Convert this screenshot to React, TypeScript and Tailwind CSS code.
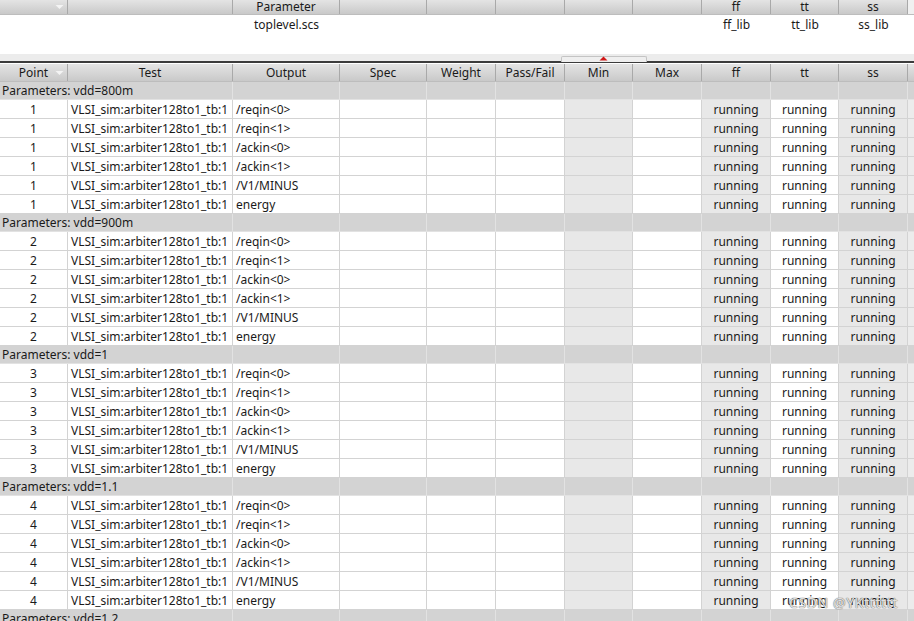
import React from "react";

const W = [68, 165, 107, 87, 69, 69, 68, 69, 69, 68, 69];
const HEAD = ["Point", "Test", "Output", "Spec", "Weight", "Pass/Fail", "Min", "Max", "ff", "tt", "ss"];
const GROUPS = ["vdd=800m", "vdd=900m", "vdd=1", "vdd=1.1", "vdd=1.2"];
const OUTS = ["/reqin<0>", "/reqin<1>", "/ackin<0>", "/ackin<1>", "/V1/MINUS", "energy"];

function Arrow() {
  return (
    <svg width="9" height="5" viewBox="0 0 9 5" className="shrink-0">
      <path d="M0.5 0.5 L8.5 0.5 L4.5 4.5 Z" fill="#f4f4f4" />
    </svg>
  );
}

function HeaderCell({ w, children, arrow }: { w: number; children?: React.ReactNode; arrow?: boolean }) {
  return (
    <div
      className="relative flex h-full shrink-0 items-center justify-center border-r border-[#a9a9a9] bg-gradient-to-b from-[#e4e4e4] to-[#c9c9c9]"
      style={{ width: w }}
    >
      <span className="text-[#1a1a1a]">{children}</span>
      {arrow && (
        <span className="absolute right-[3px] top-1/2 -translate-y-1/2">
          <Arrow />
        </span>
      )}
    </div>
  );
}

function Cell({
  w,
  children,
  bg = "bg-white",
  align = "center",
}: {
  w: number;
  children?: React.ReactNode;
  bg?: string;
  align?: "center" | "left";
}) {
  return (
    <div
      className={`flex h-full shrink-0 items-center overflow-hidden whitespace-nowrap border-r border-b border-[#d3d3d3] pt-[1px] ${bg} ${
        align === "center" ? "justify-center" : "justify-start pl-[3px]"
      }`}
      style={{ width: w }}
    >
      {children}
    </div>
  );
}

function GroupRow({ label }: { label: string }) {
  return (
    <div className="flex h-[18px] shrink-0">
      <div
        className="flex h-full shrink-0 items-center whitespace-nowrap border-r border-b border-[#e2e2e2] bg-[#d3d3d3] pl-[2px] pt-[1px]"
        style={{ width: W[0] + W[1] }}
      >
        Parameters: {label}
      </div>
      {W.slice(2).map((w, i) => (
        <div
          key={i}
          className="h-full shrink-0 border-r border-b border-[#e2e2e2] bg-[#d3d3d3]"
          style={{ width: w }}
        />
      ))}
      <div className="h-full flex-1 border-b border-[#e2e2e2] bg-[#d3d3d3]" />
    </div>
  );
}

function DataRow({ p, out }: { p: number; out: string }) {
  return (
    <div className="flex h-[19px] shrink-0">
      <Cell w={W[0]}>{p}</Cell>
      <Cell w={W[1]} align="left">VLSI_sim:arbiter128to1_tb:1</Cell>
      <Cell w={W[2]} align="left">{out}</Cell>
      <Cell w={W[3]} />
      <Cell w={W[4]} />
      <Cell w={W[5]} />
      <Cell w={W[6]} bg="bg-[#e8e8e8]" />
      <Cell w={W[7]} />
      <Cell w={W[8]} bg="bg-[#e8e8e8]">running</Cell>
      <Cell w={W[9]}>running</Cell>
      <Cell w={W[10]} bg="bg-[#e8e8e8]">running</Cell>
      <div className="h-full flex-1 border-b border-[#d3d3d3] bg-[#ececec]" />
    </div>
  );
}

export default function App() {
  const topHead = ["", "", "Parameter", "", "", "", "", "", "ff", "tt", "ss"];
  const topRow = ["", "", "toplevel.scs", "", "", "", "", "", "ff_lib", "tt_lib", "ss_lib"];
  return (
    <div
      className="relative flex h-[621px] w-[914px] flex-col overflow-hidden bg-white text-[12px] leading-none text-[#1a1a1a]"
      style={{ fontFamily: '"Noto Sans", "Open Sans", sans-serif' }}
    >
      {/* top pane */}
      <div className="flex h-[15px] shrink-0 border-b border-[#bdbdbd] leading-[14px]">
        {topHead.map((h, i) => (
          <HeaderCell key={i} w={W[i]} arrow={i === 0}>
            {h}
          </HeaderCell>
        ))}
        <div className="h-full flex-1 bg-[#f0f0f0]" />
      </div>
      <div className="flex h-[19px] shrink-0">
        {topRow.map((t, i) => (
          <div key={i} className="flex h-full shrink-0 items-center justify-center" style={{ width: W[i] }}>
            {t}
          </div>
        ))}
      </div>
      <div className="h-[20px] shrink-0 bg-white" />
      {/* splitter */}
      <div className="relative h-[7px] shrink-0 bg-[#ececec]">
        <div className="absolute left-[561px] top-[2px] h-[6px] w-[86px] rounded-t-[2px] border border-b-0 border-[#c4c4c4] bg-[#efefef]" />
        <svg className="absolute left-[599px] top-[2px]" width="9" height="5" viewBox="0 0 9 5">
          <path d="M0.5 4.5 L4.5 0.5 L8.5 4.5 Z" fill="#d01818" />
        </svg>
      </div>
      <div className="h-[2px] shrink-0 bg-[#3c3c3c]" />
      {/* bottom header */}
      <div className="flex h-[19px] shrink-0 border-b border-[#bdbdbd] pt-[1px]">
        {HEAD.map((h, i) => (
          <HeaderCell key={i} w={W[i]} arrow={i === 0}>
            {h}
          </HeaderCell>
        ))}
        <div className="h-full flex-1 bg-gradient-to-b from-[#e4e4e4] to-[#c9c9c9]" />
      </div>
      {GROUPS.map((g, gi) => (
        <React.Fragment key={g}>
          <GroupRow label={g} />
          {OUTS.map((o) => (
            <DataRow key={o} p={gi + 1} out={o} />
          ))}
        </React.Fragment>
      ))}
      <div className="pointer-events-none absolute left-[789px] top-[596px] text-[14px] tracking-[0.6px] text-[#f2f2f2]/90 [text-shadow:0_0_1px_#666,0_0_1px_#666]">
        CSDN @YKtttttt
      </div>
    </div>
  );
}
